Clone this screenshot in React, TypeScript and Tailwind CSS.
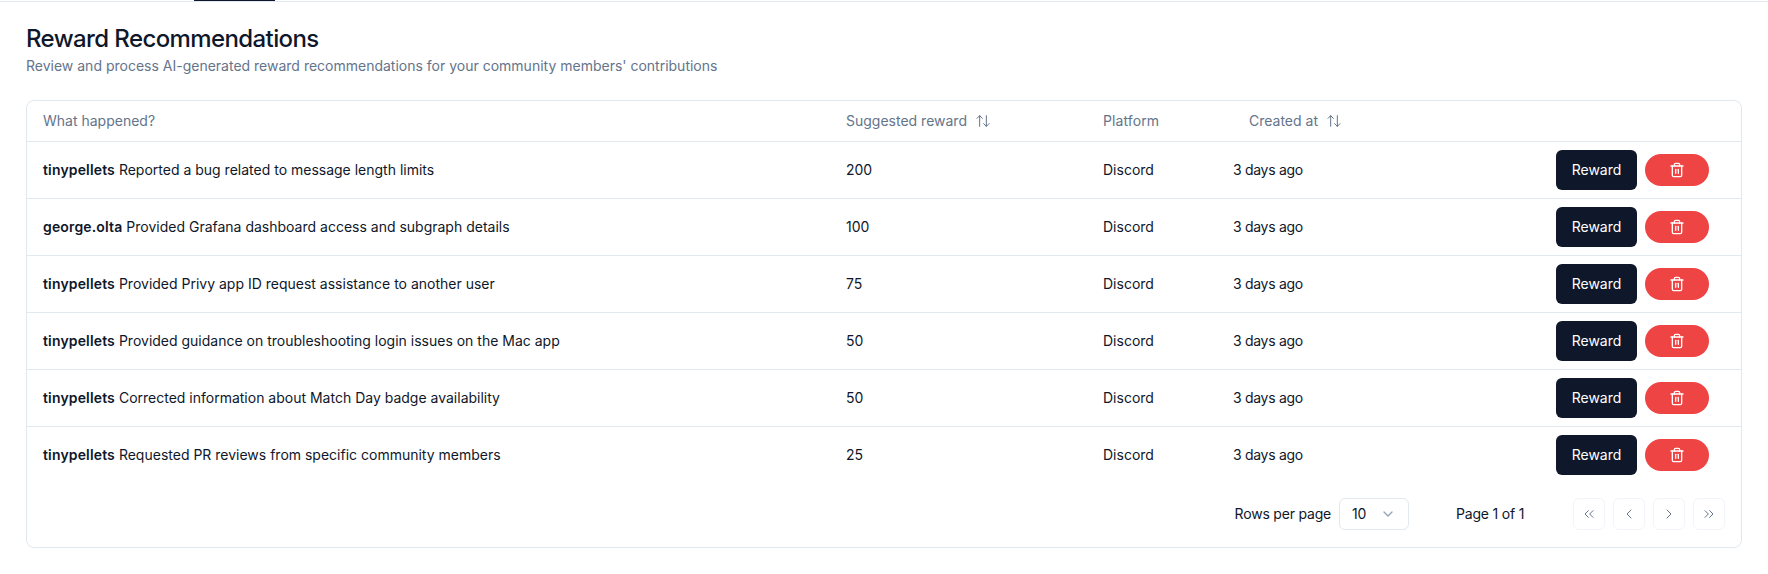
import { ArrowUpDown, ChevronDown, ChevronLeft, ChevronRight, ChevronsLeft, ChevronsRight, Trash2 } from "lucide-react";

const rows = [
  ["tinypellets", "Reported a bug related to message length limits", "200"],
  ["george.olta", "Provided Grafana dashboard access and subgraph details", "100"],
  ["tinypellets", "Provided Privy app ID request assistance to another user", "75"],
  ["tinypellets", "Provided guidance on troubleshooting login issues on the Mac app", "50"],
  ["tinypellets", "Corrected information about Match Day badge availability", "50"],
  ["tinypellets", "Requested PR reviews from specific community members", "25"],
];

function PageButton({ children }: { children: React.ReactNode }) {
  return <button className="flex h-8 w-8 items-center justify-center rounded-md border border-[#f1f5f9] text-[#64748b]">{children}</button>;
}

export default function App() {
  return (
    <div className="h-[574px] w-[1768px] overflow-hidden bg-white font-['Inter',sans-serif] text-[#0f172a]">
      <div className="h-[2px] border-b border-[#e2e8f0]">
        <div className="ml-[194px] h-[1px] w-[81px] bg-[#0f172a]" />
      </div>
      <div className="px-[26px] pt-[21px]">
        <h1 className="text-2xl leading-8 font-medium tracking-[-0.6px] text-[#0f172a]">Reward Recommendations</h1>
        <p className="mt-[1px] text-sm leading-5 text-[#64748b]">Review and process AI-generated reward recommendations for your community members' contributions</p>
        <div className="mt-[24px] h-[448px] w-[1716px] rounded-lg border border-[#e2e8f0]">
          <table className="w-full table-fixed border-collapse text-sm">
            <colgroup>
              <col className="w-[819px]" />
              <col className="w-[257px]" />
              <col className="w-[130px]" />
              <col className="w-[300px]" />
              <col />
            </colgroup>
            <thead>
              <tr className="h-[40px] border-b border-[#e2e8f0] text-[#64748b]">
                <th className="pl-4 text-left font-normal">What happened?</th>
                <th className="text-left font-normal"><span className="flex items-center gap-2">Suggested reward <ArrowUpDown size={16} strokeWidth={1.5} /></span></th>
                <th className="text-left font-normal tracking-[0.1px]">Platform</th>
                <th className="pl-4 text-left font-normal"><span className="flex items-center gap-2">Created at <ArrowUpDown size={16} strokeWidth={1.5} /></span></th>
                <th />
              </tr>
            </thead>
            <tbody>
              {rows.map((r, i) => (
                <tr key={i} className="h-[57px] border-b border-[#e2e8f0] font-normal last:border-b-0">
                  <td className="pl-4"><span className="font-semibold tracking-[0.15px]">{r[0]}</span> {r[1]}</td>
                  <td>{r[2]}</td>
                  <td>Discord</td>
                  <td className="tracking-[-0.3px]">3 days ago</td>
                  <td className="pr-8">
                    <div className="flex items-center justify-end gap-2">
                      <button className="h-10 w-[81px] rounded-md bg-[#0f172a] text-sm font-normal text-white">Reward</button>
                      <button className="flex h-8 w-16 items-center justify-center rounded-full bg-[#ef4444] text-white"><Trash2 size={16} strokeWidth={2} /></button>
                    </div>
                  </td>
                </tr>
              ))}
            </tbody>
          </table>
          <div className="flex h-[62px] items-center justify-end pr-4 text-sm font-normal tracking-[-0.2px]">
            <span>Rows per page</span>
            <div className="ml-2 flex h-8 w-[70px] items-center justify-between rounded-md border border-[#e2e8f0] px-3">
              <span>10</span>
              <ChevronDown size={16} className="text-[#94a3b8]" />
            </div>
            <span className="ml-[47px] w-[117px]">Page 1 of 1</span>
            <div className="flex gap-2">
              <PageButton><ChevronsLeft size={16} strokeWidth={1.5} /></PageButton>
              <PageButton><ChevronLeft size={16} strokeWidth={1.5} /></PageButton>
              <PageButton><ChevronRight size={16} strokeWidth={1.5} /></PageButton>
              <PageButton><ChevronsRight size={16} strokeWidth={1.5} /></PageButton>
            </div>
          </div>
        </div>
      </div>
    </div>
  );
}
